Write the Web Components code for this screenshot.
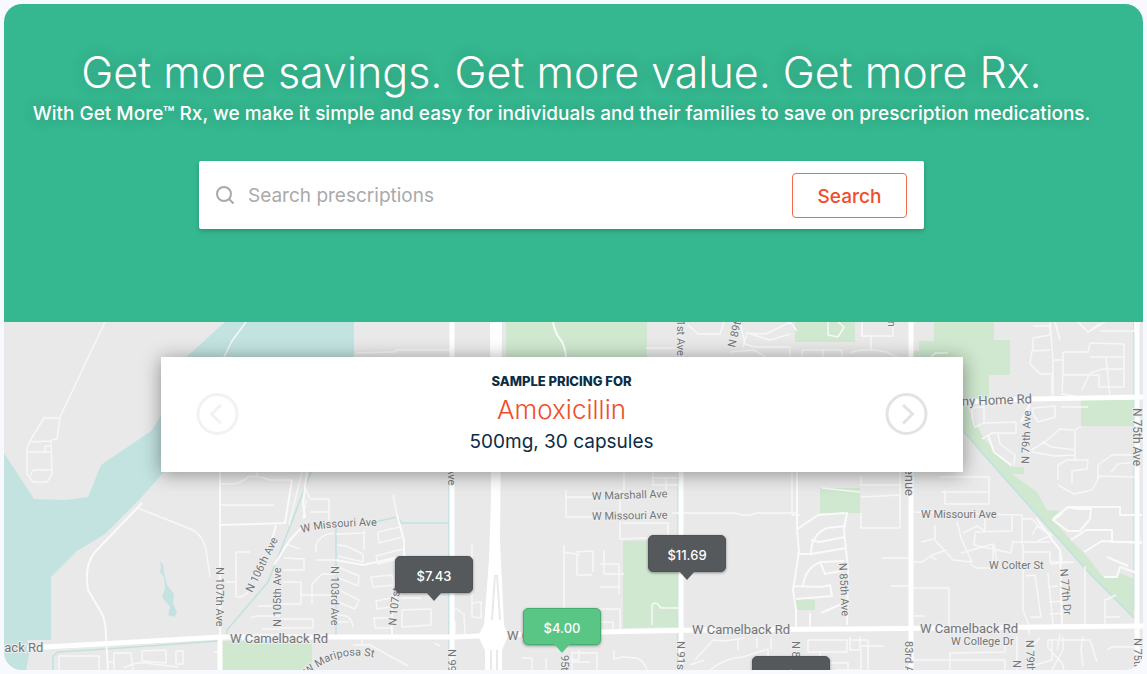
<!DOCTYPE html>
<html lang="en">
<head>
<meta charset="utf-8">
<meta name="viewport" content="width=device-width, initial-scale=1">
<title>Get More Rx</title>
<style>
  body {
    margin: 0;
    background: #f8f9fe;
    color: #0b2d45;
    font-family: Inter, "Open Sans", sans-serif;
  }
</style>
</head>
<body>

<rx-page>
  <rx-hero>
    <span slot="title">Get more savings. Get more value. Get more Rx.</span>
    <span slot="lead">With Get More™ Rx, we make it simple and easy for individuals and their families to save on prescription medications.</span>
    <rx-search placeholder="Search prescriptions">Search</rx-search>
  </rx-hero>
  <rx-map>
    <rx-pricing>
      <span slot="label">SAMPLE PRICING FOR</span>
      <span slot="drug">Amoxicillin</span>
      <span slot="dose">500mg, 30 capsules</span>
    </rx-pricing>
    <price-pin slot="pin" x="430" y="280">$7.43</price-pin>
    <price-pin slot="pin" x="683" y="259">$11.69</price-pin>
    <price-pin slot="pin" x="558" y="332" best>$4.00</price-pin>
    <price-pin slot="pin" x="787" y="380">$</price-pin>
  </rx-map>
</rx-page>

<script>
// page frame
class RxPage extends HTMLElement {
  constructor() {
    super();
    this.attachShadow({ mode: "open" });
    this.shadowRoot.innerHTML =
    `<style>
      :host {
        box-sizing: border-box;
        display: flex;
        min-height: 100vh;
        padding: 4px;
      }
      main {
        border-radius: 18px;
        display: flex;
        flex: 1;
        flex-direction: column;
        min-width: 0;
        overflow: hidden;
      }
      ::slotted(rx-map) {
        flex: 1;
      }
    </style>
    <main><slot></slot></main>`;
  }
}

// green banner
class RxHero extends HTMLElement {
  constructor() {
    super();
    this.attachShadow({ mode: "open" });
    this.shadowRoot.innerHTML =
    `<style>
      :host {
        align-items: center;
        background: #35b78f;
        box-sizing: border-box;
        color: white;
        display: flex;
        flex-direction: column;
        min-height: 318px;
        padding: 40px 24px 40px 0;
        text-align: center;
      }
      h1 {
        font-size: 43px;
        font-weight: 300;
        line-height: 56px;
        margin: 0;
        text-shadow: 0 0 16px rgba(0, 0, 0, 0.2);
      }
      p {
        font-size: 19px;
        font-weight: 500;
        line-height: 28px;
        margin: 0 0 33px;
        text-shadow: 0 0 16px rgba(0, 0, 0, 0.2);
      }
    </style>
    <h1><slot name="title"></slot></h1>
    <p><slot name="lead"></slot></p>
    <slot></slot>`;
  }
}

// search box
class RxSearch extends HTMLElement {
  constructor() {
    super();
    this.attachShadow({ mode: "open" });
    this.shadowRoot.innerHTML =
    `<style>
      :host {
        display: block;
        max-width: 725px;
        width: 100%;
      }
      form {
        align-items: center;
        background: white;
        border-radius: 2px;
        box-shadow: 0 2px 4px rgba(0, 0, 0, 0.2);
        box-sizing: border-box;
        display: flex;
        gap: 12px;
        min-height: 68px;
        padding: 11px 17px;
      }
      label {
        display: flex;
      }
      input {
        background: none;
        border: none;
        color: #0b2d45;
        flex: 1;
        font: 400 19px Inter, sans-serif;
        min-width: 0;
        outline: none;
        padding: 0;
      }
      input::placeholder {
        color: #aaa;
        opacity: 1;
      }
      button {
        background: white;
        border: 1px solid #f4694c;
        border-radius: 4px;
        color: #f04e2a;
        cursor: pointer;
        font: 500 19px Inter, sans-serif;
        height: 45px;
        padding: 2px 0 0;
        width: 115px;
      }
    </style>
    <form>
      <label for="q">
        <svg width="20" height="20" viewBox="0 0 20 20" fill="none" stroke="#a9a9a9" stroke-width="2" role="img" aria-label="Search for"><circle cx="8" cy="9" r="7"/><path d="M13 14L17.500 18.500"/></svg>
      </label>
      <input id="q" type="text">
      <button type="submit"><slot></slot></button>
    </form>`;
    this.shadowRoot.querySelector("input").placeholder = this.getAttribute("placeholder");
    this.shadowRoot.querySelector("form").onsubmit = function(e) { e.preventDefault(); };
  }
}

// sample price panel
class RxPricing extends HTMLElement {
  constructor() {
    super();
    this.attachShadow({ mode: "open" });
    this.shadowRoot.innerHTML =
    `<style>
      :host {
        align-items: center;
        background: white;
        box-shadow: 0 2px 18px rgba(0, 0, 0, 0.4);
        box-sizing: border-box;
        display: flex;
        justify-content: space-between;
        max-width: 802px;
        padding: 13px 35px 16px;
        position: relative;
        text-align: center;
        width: 100%;
      }
      button {
        background: none;
        border: none;
        cursor: pointer;
        display: flex;
        padding: 0;
      }
      button:disabled {
        cursor: default;
        opacity: 0.45;
      }
      h2, p {
        margin: 0;
      }
      h2 {
        font-size: 13px;
        font-weight: 800;
        line-height: 22px;
      }
      .drug {
        color: #f04e2a;
        font-size: 26px;
        font-weight: 300;
        line-height: 36px;
      }
      .dose {
        font-size: 19px;
        line-height: 28px;
      }
    </style>
    <button type="button" aria-label="Previous" disabled>
      <svg width="43" height="43" viewBox="0 0 43 43" fill="none" stroke="#e3e3e3" stroke-width="3"><circle cx="21.500" cy="22" r="19.500"/><path d="M25 13L15.500 22L25 31.500"/></svg>
    </button>
    <div>
      <h2><slot name="label"></slot></h2>
      <p class="drug"><slot name="drug"></slot></p>
      <p class="dose"><slot name="dose"></slot></p>
    </div>
    <button type="button" aria-label="Next">
      <svg width="43" height="43" viewBox="0 0 43 43" fill="none" stroke="#e3e3e3" stroke-width="3"><circle cx="21.500" cy="22" r="19.500"/><path d="M18 13L27.500 22L18 31.500"/></svg>
    </button>`;
  }
}

// price marker, its tip stands at x, y of the map
class PricePin extends HTMLElement {
  constructor() {
    super();
    this.attachShadow({ mode: "open" });
    this.shadowRoot.innerHTML =
    `<style>
      :host {
        --pin: #55595c;
        --edge: #4f5356;
        background: var(--pin);
        border: 1px solid var(--edge);
        border-radius: 5px;
        box-shadow: 0 1px 3px rgba(0, 0, 0, 0.4);
        box-sizing: border-box;
        color: white;
        font-size: 13px;
        font-weight: 500;
        line-height: 20px;
        padding: 9px 0 6px;
        position: absolute;
        text-align: center;
        transform: translate(-50%, -46px);
        width: 78px;
      }
      :host([best]) {
        --pin: #59c686;
        --edge: #45ad72;
      }
      :host::after {
        border: 8px solid transparent;
        border-bottom: none;
        border-top: 9px solid var(--pin);
        content: "";
        left: 30px;
        position: absolute;
        top: 100%;
      }
    </style>
    <slot></slot>`;
    this.style.left = this.getAttribute("x") + "px";
    this.style.top = this.getAttribute("y") + "px";
  }
}

// street map with the panel and pins on top
class RxMap extends HTMLElement {
  constructor() {
    super();
    this.attachShadow({ mode: "open" });
    this.shadowRoot.innerHTML =
    `<style>
      :host {
        background: #e9e9e9;
        box-sizing: border-box;
        display: flex;
        align-items: flex-start;
        justify-content: center;
        min-height: 348px;
        overflow: hidden;
        padding: 35px 24px 0 0;
        position: relative;
      }
      .streets {
        height: 100%;
        left: 0;
        position: absolute;
        top: 0;
        width: 100%;
      }
      .water { fill: #c2e3e0; }
      .park { fill: #cfe8cf; }
      .canal, .road, .street, .lane { fill: none; }
      .canal { stroke: #bfe2df; stroke-width: 1.5; }
      .road { stroke: white; stroke-width: 5; }
      .street { stroke: #fafafa; stroke-width: 2; stroke-linejoin: round; }
      .lane { stroke: #f7f7f7; stroke-width: 1.5; stroke-linejoin: round; }
      text {
        fill: #737678;
        font-family: Roboto, sans-serif;
        font-size: 11px;
        paint-order: stroke;
        stroke: #eeeeee;
        stroke-width: 2px;
      }
      .big { font-size: 13px; }
    </style>
    <svg class="streets" viewBox="4 322 1139 348" preserveAspectRatio="xMinYMin slice" role="img" aria-label="Street map">
      <g class="water">
        <path d="M225 322H353V380L163 473L139 500L105 534L77 551L51 577V640H27L30 650L26 670H4V453L34 499L66 500L88 497L101 465L151 431L161 416V380Z"/>
        <path d="M160 562L163 564L164 573L167 585L174 594L173 603L177 613L174 617L168 615L170 607L162 597L165 588L164 577L160 572L161 567Z"/>
      </g>
      <g class="park">
        <path d="M506 322H647V357H506ZM795 322H855V342H795Z"/>
        <path d="M934 322H994V340H1010V375H989V400H963V357H913V351H919V341H934Z"/>
        <path d="M963 396L972 417L985 440L1011 467H1024V474H1012L1037 492L1047 510L1060 511L1052 519L1070 539L1084 553L1104 578L1117 577L1120 573L1134 579V618L1091 575L1006 480L963 431Z"/>
        <path d="M1081 400H1134V426H1081ZM222 641H312V670H222ZM623 541L677 540V627L623 628ZM820 488H860V513H820ZM795 598L815 600V610H797Z"/>
      </g>
      <g class="canal">
        <path d="M311 472L280 552L268 582L227 630V640M53 670V656L58 652L106 649L218 641M336 528V635M366 524L397 517L402 523H449M449 475V670M678 475V670M353 322V357M963 431L1006 480L1091 575L1134 618M1134 322V610M912 520V585"/>
      </g>
      <g class="lane">
        <path d="M105 322L60 417L57 439L51 440M60 418H44L30 441L27 448V474L33 482H47L52 474L51 441L30 442M28 452H51M45 452V446H51M30 476L33 470H52M356 353L393 352L397 350H450M246 322L232 341L224 357"/>
        <path d="M138 508L193 530Q203 536 206 550L210 577M250 552H236V596Q240 600 248 592M226 582H236M220 505H274M214 652H218M257 472V477M220 484H232Q242 483 248 477Q258 475 270 480H292"/>
        <path d="M59 656H99V670M59 656V670M114 653H131L133 670M114 653V670M142 651L166 650V663L142 661ZM108 662H114M176 651H183V664H176ZM124 668Q138 660 152 664L178 667"/>
        <path d="M302 472L289 525M304 485L310 499H329V520M306 500L303 519M310 512H329M286 544L300 549M284 558L304 559V570H283M283 582H301V604H281M312 604V584L322 574H336M281 619H313V628H280M301 595H336M251 618L256 616H280M258 606H280M262 629H280M316 552V545Q320 534 334 533M316 560H336M364 530V550M336 534L366 533M393 495L397 515M378 532L400 527L403 537L379 543ZM376 556L403 549L406 557L378 564ZM371 577L392 575L394 585L373 587ZM376 601L396 597L397 606L377 609ZM374 618H391V628H375Z"/>
        <path d="M337 545L346 546L363 554V562L338 556M338 567L359 576L358 586L339 578M339 590L359 600L355 609L338 602M337 615Q352 614 353 627M337 622H349M401 598H421M402 610L431 609V625L402 627ZM455 608L464 614L465 634M472 603V617L481 618V602L472 603M455 621V635M472 545V603M566 490V517H592M566 497H592M564 545V610M564 552L580 555M577 554V575H592M575 552L593 551V572M604 550V574H624M600 564H619V594M600 587H620M590 609H620V633M620 490V539L668 537V523H622M666 490V478M624 472V490M653 478H678M653 472V485H678"/>
        <path d="M353 645H370L408 666M362 640V646M434 643L440 646M572 651V670M566 660H579V650M522 658H532V670M546 658V670M574 622H613V634M614 650V659L622 657L637 658Q644 661 647 670M573 653H597V670M573 662H590M652 625V605Q656 600 661 608H679M695 660L713 640L726 641L744 638M710 670Q724 658 743 657L768 649V670M738 638V650M757 638V648M771 638V649M690 665L704 660M808 640H847V652H808ZM820 652V663H848V670M850 637V650H861V670H835M860 646H884"/>
        <path d="M688 325L698 334H720L724 322M740 322L745 344L755 347H790V357M743 347L747 333L766 334L790 322M748 333L770 340L790 334M802 357V350H823V361M817 350H842V357M828 322V335L838 337L844 327L838 322M862 322V336H868M646 348H682M730 352L754 350L766 357M797 331L790 322"/>
        <path d="M862 322V336H893V325M871 336V350M850 353Q865 347 886 352L899 358M931 356L936 353H948M1033 326H1050V335L1033 338V350M1050 350L1032 351L1030 364L1040 374H1052V395M1050 322L1053 360V397M1054 360H1063M1055 322L1060 340M1063 352H1088L1090 343L1124 344V387H1099V375H1063V352M1063 375L1062 394L1080 397M1082 390L1090 373L1103 369H1124M1090 357H1124M1106 357L1110 397M1078 322L1088 332L1100 323M1088 332L1105 322M1100 331H1135V322M972 408L984 407V423L975 427L972 418ZM984 423L1016 422V433H992L982 439M998 434L1000 444L1015 455L1014 465M1033 408L1055 406V417L1038 422L1033 414ZM1081 426L1075 430V460M1088 407H1061M1030 451L1046 441L1060 429L1074 430M1042 442L1052 447L1075 450M1032 452L1055 456L1075 455M1058 480V465L1067 460H1088L1087 469L1072 471V483M1058 485L1074 494L1092 490L1100 476L1135 477M1098 480V465L1112 455H1135M1111 472L1118 464L1135 462"/>
        <path d="M861 476V485H900V472M861 497L900 495M861 513V528H900V476M822 488L860 492M800 515H792V472M672 513H735L742 515L750 515L757 513H796M912 512L1022 515V545H1023V610L1029 625V635M945 490V504H989V477H940M941 492H988M882 558H909M891 586H909M912 588H949V627M914 616H925M1022 519H1032L1045 532M1012 542H1050M921 542L934 539M935 525V540L953 560L972 562L961 538L957 521M963 533L977 526L985 531V512M975 533L974 545L1011 553L1013 541M975 532L1012 531V516M961 553L993 544V563M912 562H922L932 555L947 550M930 556L937 560M970 564L976 568H992M994 545L997 561M1033 543L1052 535L1037 526L1032 535M1050 538L1060 550L1063 564M1023 552H1050V562H1070M1026 576L1035 575L1041 617H1030M1048 573L1053 625H1068M1048 587L1058 586M1049 602L1065 601M1049 614L1068 613M1050 564L1074 562M1085 566V625M1105 599V625H1135M1116 595L1106 600M1120 617H1105"/>
        <path d="M860 637V650M850 640H868V670M912 660H1005V670M950 670V653L1005 652V636M1017 636V670M1029 667L1052 660V640M1048 640V648L1062 663L1064 670M1047 640H1090L1097 662M1063 637V650L1052 670M1083 637L1081 650L1083 666M1034 650V644L1040 638M1060 634L1057 650M1107 650L1112 647H1134"/>
      </g>
      <g class="street">
        <path d="M142 503L95 552Q84 565 88 590L101 612Q106 620 106 637L108 670M220 472V636M220 525L285 523L292 480M276 525L272 540M274 565L290 540L302 527M307 472L303 503L305 518M397 515L404 540V560M336 560L363 565L404 556M392 595V635"/>
        <path d="M797 472V529L799 552L793 590L796 610V629M796 530L818 515L845 513M847 512L844 530L848 570L847 625M846 526L827 528Q811 535 811 553M811 540L820 542L845 537M797 554H811L846 548M803 585Q806 567 821 562L844 561M820 562L825 574L845 570M794 586L821 587L830 585L832 596L796 599M821 613L846 602M810 613V628"/>
        <path d="M988 435L994 452L1011 465M1032 400L1021 422M1063 513L1053 520L1068 531L1080 531L1090 519L1091 509L1078 509L1066 507M1053 519L1068 507H1120V515H1142M1071 540L1086 530H1112V542H1142M1084 552L1102 541L1142 543M1104 577H1117L1120 567L1137 573M1107 557L1128 566M1036 518L1060 550L1062 625"/>
      </g>
      <path class="street" d="M553 322Q555 333 560 339T566 357"/>
      <g class="road">
        <path d="M27 648L100 644L220 637L455 637L500 635L600 632L700 630L850 629L1143 626M452 322V670M681 472V670M911 322V670M1137 322V670M963 402L1030 399L1143 397M220 638V670"/>
      </g>
      <path fill="white" d="M490 322H502L500 540L504 625L508 636L502 650V670H485V650L478 636L484 625L489 560L491 500Z"/>
      <path fill="none" stroke="#e9e9e9" stroke-width="2" d="M495 575L492 620M497 575L500 620M491 650V670M497 650V670"/>
      <g>
        <text class="big" transform="translate(955 406) rotate(-2)">any Home Rd</text>
        <text class="big" x="-40" y="652">Camelback Rd</text>
        <text class="big" x="230" y="643">W Camelback Rd</text>
        <text class="big" x="507" y="640">W C</text>
        <text class="big" x="692" y="634">W Camelback Rd</text>
        <text class="big" x="920" y="633">W Camelback Rd</text>
        <text x="951" y="645">W College Dr</text>
        <text x="921" y="518">W Missouri Ave</text>
        <text x="989" y="569">W Colter St</text>
        <text transform="translate(592 500) rotate(-2)">W Marshall Ave</text>
        <text transform="translate(592 520) rotate(-1)">W Missouri Ave</text>
        <path id="missouri" fill="none" d="M302 533Q330 525 384 526"/>
        <text><textPath href="#missouri">W Missouri Ave</textPath></text>
        <path id="mariposa" fill="none" d="M308 676Q338 646 384 660"/>
        <text><textPath href="#mariposa">W Mariposa St</textPath></text>
        <text transform="translate(216 567) rotate(90)">N 107th Ave</text>
        <text transform="translate(252 593) rotate(-64)">N 106th Ave</text>
        <text transform="translate(281 627) rotate(-90)">N 105th Ave</text>
        <text transform="translate(331 566) rotate(90)">N 103rd Ave</text>
        <text transform="translate(396 626) rotate(-84)">N 107st</text>
        <text transform="translate(448 432) rotate(90)">N 99th Ave</text>
        <text transform="translate(448 649) rotate(90)">N 99th</text>
        <text transform="translate(561 655) rotate(90)">95th</text>
        <text transform="translate(677 303) rotate(90)">N 91st Ave</text>
        <text transform="translate(677 641) rotate(90)">N 91st</text>
        <text transform="translate(735 348) rotate(-77)">N 89th</text>
        <text transform="translate(792 641) rotate(90)">N 8</text>
        <text transform="translate(839 563) rotate(87)">N 85th Ave</text>
        <text transform="translate(905 424) rotate(90)" class="big">83rd Avenue</text>
        <text transform="translate(905 641) rotate(90)">83rd Ave</text>
        <text transform="translate(888 308) rotate(90)">Run</text>
        <text transform="translate(1029 464) rotate(-88)">N 79th Ave</text>
        <text transform="translate(1026 640) rotate(88)">N 79th</text>
        <text transform="translate(1013 660) rotate(90)">N 80th</text>
        <text transform="translate(1060 569) rotate(85)">N 77th Dr</text>
        <text transform="translate(1133 408) rotate(90)" style="font-size: 12px">N 75th Ave</text>
        <text transform="translate(1134 638) rotate(90)">N 75th</text>
      </g>
    </svg>
    <slot></slot>
    <slot name="pin"></slot>`;
  }
}

customElements.define("rx-page", RxPage);
customElements.define("rx-hero", RxHero);
customElements.define("rx-search", RxSearch);
customElements.define("rx-pricing", RxPricing);
customElements.define("price-pin", PricePin);
customElements.define("rx-map", RxMap);
</script>
</body>
</html>
